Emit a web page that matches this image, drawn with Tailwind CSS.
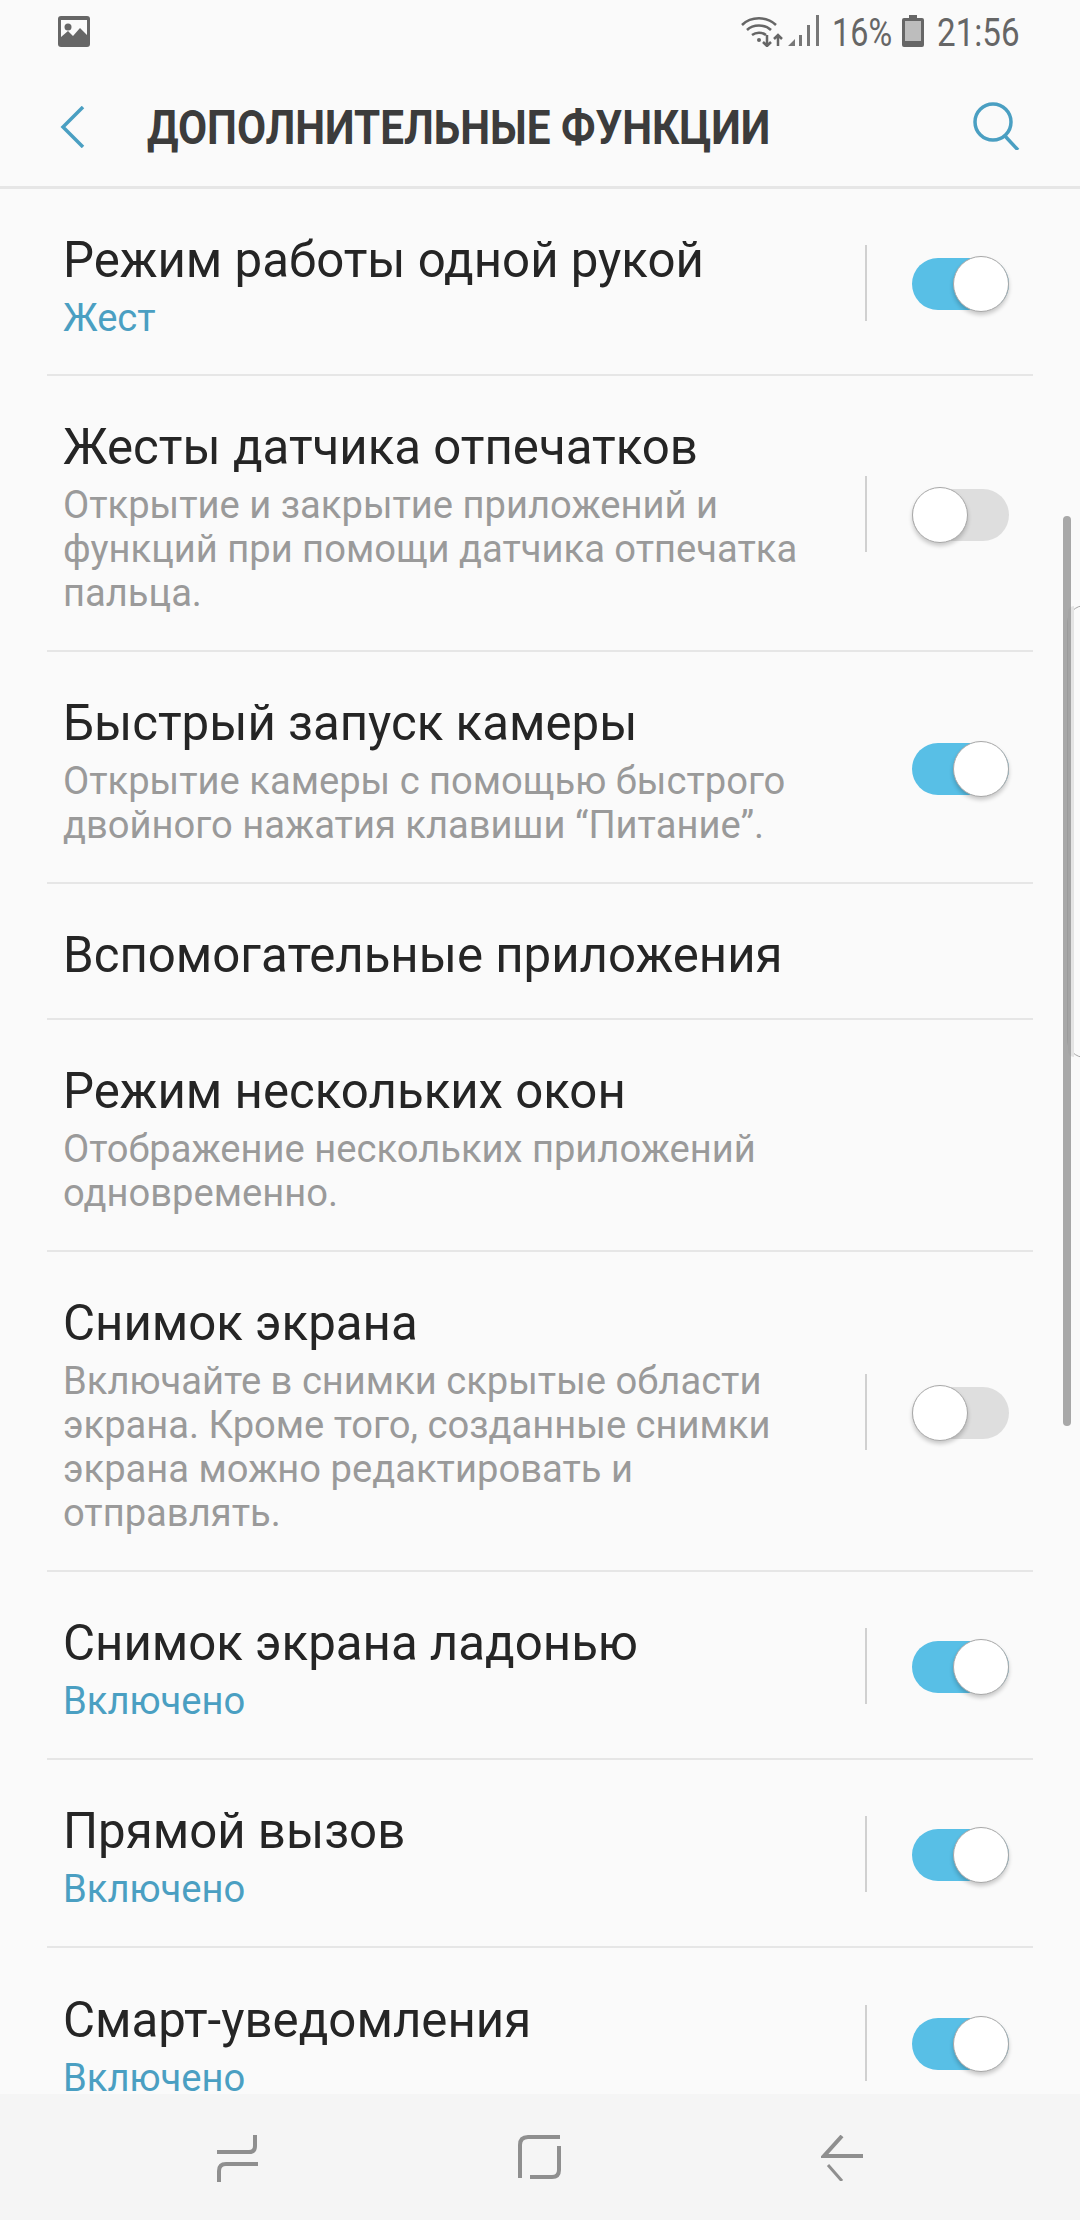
<!DOCTYPE html>
<html lang="ru">
<head>
  <meta charset="UTF-8" />
  <title>Дополнительные функции</title>
  <script src="https://cdn.jsdelivr.net/npm/@tailwindcss/browser@4"></script>
</head>
<body class="bg-[#fafafa] font-['Roboto',sans-serif]">
<div class="relative w-[1080px] h-[2220px] overflow-hidden flex flex-col">

  <!-- status bar -->
  <div class="h-[62px] shrink-0 flex items-center justify-between pl-[58px] pr-[58px] text-[#666666]">
    <svg class="w-[32px] h-[31px]" viewBox="0 0 32 31">
      <path fill="#666666" d="M3 0h26a3 3 0 0 1 3 3v25a3 3 0 0 1-3 3H3a3 3 0 0 1-3-3V3a3 3 0 0 1 3-3z"/>
      <path fill="#fafafa" d="M3 4h26v15l-7-7-7 8-5-5-7 6z"/>
      <circle cx="10" cy="11" r="3.5" fill="#666666"/>
    </svg>
    <div class="flex items-center h-full">
      <svg class="w-[43px] h-[31px] mr-[4px]" viewBox="0 0 43 31" fill="none" stroke="#666666" stroke-width="2.5">
        <path d="M1 9c9-9 25-9 34 0"/>
        <path d="M6 14c6-6 18-6 24 0"/>
        <path d="M11 19c4-3 10-3 14 0"/>
        <circle cx="18" cy="24" r="2" fill="#666666" stroke="none"/>
        <path stroke-width="2.5" d="M26 19v11M22 26l4 4 4-4M37 30V19M33 23l4-4 4 4"/>
      </svg>
      <svg class="w-[32px] h-[32px] mr-[12px]" viewBox="0 0 32 32" fill="#777777">
        <path d="M0 31l7-7v7zM11 20h3v11h-3zM19 10h3v21h-3zM28 0h3v31h-3z"/>
      </svg>
      <span class="text-[39px] leading-none w-[61px] mr-[9px] mt-[4px] scale-x-[0.83] origin-left whitespace-nowrap">16%</span>
      <svg class="w-[22px] h-[32px] mr-[13px]" viewBox="0 0 22 32">
        <path fill="#666666" d="M7 0h8v3h5a2 2 0 0 1 2 2v25a2 2 0 0 1-2 2H2a2 2 0 0 1-2-2V5a2 2 0 0 1 2-2h5z"/>
        <rect x="3" y="6" width="16" height="20" fill="#bdbdbd"/>
      </svg>
      <span class="text-[39px] leading-none w-[85px] mt-[4px] scale-x-[0.85] origin-left whitespace-nowrap">21:56</span>
    </div>
  </div>

  <!-- header -->
  <div class="h-[127px] shrink-0 flex items-center border-b-[3px] border-[#e6e6e6] relative">
    <svg class="ml-[60px] w-[25px] h-[42px] mt-[6px]" viewBox="0 0 25 42" fill="none" stroke="#4a9fc2" stroke-width="3.5">
      <path d="M23 1L3 21l20 20"/>
    </svg>
    <h1 class="ml-[62px] mt-[8px] text-[48px] leading-none font-bold text-[#3c3c3c] scale-x-[0.88] origin-left whitespace-nowrap">ДОПОЛНИТЕЛЬНЫЕ ФУНКЦИИ</h1>
    <svg class="absolute left-[972px] top-[40px] w-[48px] h-[48px]" viewBox="0 0 48 48" fill="none" stroke="#4a9fc2" stroke-width="3.5">
      <circle cx="21" cy="20" r="18"/>
      <path d="M33 34l13 14"/>
    </svg>
  </div>

  <!-- rows -->
  <div class="flex-1 overflow-hidden px-[47px]">

    <div class="flex items-center justify-between h-[187px] border-b-2 border-[#e6e6e6] pl-[16px] pr-[24px]">
      <div class="pt-[8px]">
        <div class="text-[49.2px] leading-[56px] text-[#252525]">Режим работы одной рукой</div>
        <div class="text-[38.15px] leading-[44px] mt-[8px] text-[#4a9fc2]">Жест</div>
      </div>
      <div class="flex items-center mt-[2px]">
        <div class="w-[2px] h-[76px] bg-[#d0d0d0] mr-[45px]"></div>
        <div class="relative w-[97px] h-[52px] mt-[2px] rounded-full bg-[#58bfe6]">
          <div class="absolute right-0 -top-[2px] w-[56px] h-[56px] rounded-full bg-white border border-[#a8a8a8] shadow-[0_3px_4px_rgba(0,0,0,0.2)]"></div>
        </div>
      </div>
    </div>

    <div class="flex items-center justify-between h-[276px] border-b-2 border-[#e6e6e6] pl-[16px] pr-[24px]">
      <div class="pt-[8px]">
        <div class="text-[49.2px] leading-[56px] text-[#252525]">Жесты датчика отпечатков</div>
        <div class="text-[38.15px] leading-[44px] mt-[8px] text-[#9a9a9a]">Открытие и закрытие приложений и<br>функций при помощи датчика отпечатка<br>пальца.</div>
      </div>
      <div class="flex items-center mt-[2px]">
        <div class="w-[2px] h-[76px] bg-[#d0d0d0] mr-[45px]"></div>
        <div class="relative w-[97px] h-[52px] mt-[2px] rounded-full bg-[#dedede]">
          <div class="absolute left-0 -top-[2px] w-[56px] h-[56px] rounded-full bg-white border border-[#a8a8a8] shadow-[0_3px_4px_rgba(0,0,0,0.2)]"></div>
        </div>
      </div>
    </div>

    <div class="flex items-center justify-between h-[232px] border-b-2 border-[#e6e6e6] pl-[16px] pr-[24px]">
      <div class="pt-[8px]">
        <div class="text-[49.2px] leading-[56px] text-[#252525]">Быстрый запуск камеры</div>
        <div class="text-[38.15px] leading-[44px] mt-[8px] text-[#9a9a9a]">Открытие камеры с помощью быстрого<br>двойного нажатия клавиши “Питание”.</div>
      </div>
      <div class="flex items-center mt-[2px]">
        <div class="relative w-[97px] h-[52px] mt-[2px] rounded-full bg-[#58bfe6]">
          <div class="absolute right-0 -top-[2px] w-[56px] h-[56px] rounded-full bg-white border border-[#a8a8a8] shadow-[0_3px_4px_rgba(0,0,0,0.2)]"></div>
        </div>
      </div>
    </div>

    <div class="flex items-center h-[136px] border-b-2 border-[#e6e6e6] pl-[16px]">
      <div class="pt-[8px] text-[49.2px] leading-[56px] text-[#252525]">Вспомогательные приложения</div>
    </div>

    <div class="flex items-center h-[232px] border-b-2 border-[#e6e6e6] pl-[16px]">
      <div class="pt-[8px]">
        <div class="text-[49.2px] leading-[56px] text-[#252525]">Режим нескольких окон</div>
        <div class="text-[38.15px] leading-[44px] mt-[8px] text-[#9a9a9a]">Отображение нескольких приложений<br>одновременно.</div>
      </div>
    </div>

    <div class="flex items-center justify-between h-[320px] border-b-2 border-[#e6e6e6] pl-[16px] pr-[24px]">
      <div class="pt-[8px]">
        <div class="text-[49.2px] leading-[56px] text-[#252525]">Снимок экрана</div>
        <div class="text-[38.15px] leading-[44px] mt-[8px] text-[#9a9a9a]">Включайте в снимки скрытые области<br>экрана. Кроме того, созданные снимки<br>экрана можно редактировать и<br>отправлять.</div>
      </div>
      <div class="flex items-center mt-[2px]">
        <div class="w-[2px] h-[76px] bg-[#d0d0d0] mr-[45px]"></div>
        <div class="relative w-[97px] h-[52px] mt-[2px] rounded-full bg-[#dedede]">
          <div class="absolute left-0 -top-[2px] w-[56px] h-[56px] rounded-full bg-white border border-[#a8a8a8] shadow-[0_3px_4px_rgba(0,0,0,0.2)]"></div>
        </div>
      </div>
    </div>

    <div class="flex items-center justify-between h-[188px] border-b-2 border-[#e6e6e6] pl-[16px] pr-[24px]">
      <div class="pt-[8px]">
        <div class="text-[49.2px] leading-[56px] text-[#252525]">Снимок экрана ладонью</div>
        <div class="text-[38.15px] leading-[44px] mt-[8px] text-[#4a9fc2]">Включено</div>
      </div>
      <div class="flex items-center mt-[2px]">
        <div class="w-[2px] h-[76px] bg-[#d0d0d0] mr-[45px]"></div>
        <div class="relative w-[97px] h-[52px] mt-[2px] rounded-full bg-[#58bfe6]">
          <div class="absolute right-0 -top-[2px] w-[56px] h-[56px] rounded-full bg-white border border-[#a8a8a8] shadow-[0_3px_4px_rgba(0,0,0,0.2)]"></div>
        </div>
      </div>
    </div>

    <div class="flex items-center justify-between h-[188px] border-b-2 border-[#e6e6e6] pl-[16px] pr-[24px]">
      <div class="pt-[8px]">
        <div class="text-[49.2px] leading-[56px] text-[#252525]">Прямой вызов</div>
        <div class="text-[38.15px] leading-[44px] mt-[8px] text-[#4a9fc2]">Включено</div>
      </div>
      <div class="flex items-center mt-[2px]">
        <div class="w-[2px] h-[76px] bg-[#d0d0d0] mr-[45px]"></div>
        <div class="relative w-[97px] h-[52px] mt-[2px] rounded-full bg-[#58bfe6]">
          <div class="absolute right-0 -top-[2px] w-[56px] h-[56px] rounded-full bg-white border border-[#a8a8a8] shadow-[0_3px_4px_rgba(0,0,0,0.2)]"></div>
        </div>
      </div>
    </div>

    <div class="flex items-center justify-between h-[188px] pl-[16px] pr-[24px]">
      <div class="pt-[8px]">
        <div class="text-[49.2px] leading-[56px] text-[#252525]">Смарт-уведомления</div>
        <div class="text-[38.15px] leading-[34px] mt-[13px] mb-[5px] text-[#4a9fc2]">Включено</div>
      </div>
      <div class="flex items-center mt-[2px]">
        <div class="w-[2px] h-[76px] bg-[#d0d0d0] mr-[45px]"></div>
        <div class="relative w-[97px] h-[52px] mt-[2px] rounded-full bg-[#58bfe6]">
          <div class="absolute right-0 -top-[2px] w-[56px] h-[56px] rounded-full bg-white border border-[#a8a8a8] shadow-[0_3px_4px_rgba(0,0,0,0.2)]"></div>
        </div>
      </div>
    </div>
  </div>

  <!-- nav bar -->
  <div class="h-[126px] shrink-0 bg-[#f5f5f5] flex items-start pt-[41px] pl-[217px]">
    <svg class="w-[41px] h-[47px]" viewBox="0 0 41 47" fill="none" stroke="#8f8f8f">
      <path stroke-width="4" d="M0 17h32q6 0 6-6V0"/>
      <path stroke-width="4" d="M41 29H9q-7 0-7 7v11"/>
    </svg>
    <svg class="w-[43px] h-[44px] ml-[260px]" viewBox="0 0 43 44" fill="none" stroke="#8f8f8f">
      <path stroke-width="4" d="M42 2H10q-8 0-8 8v33"/>
      <path stroke-width="4" d="M41 11v24q0 7-7 7H12"/>
    </svg>
    <svg class="w-[42px] h-[46px] ml-[260px]" viewBox="0 0 42 46" fill="none" stroke="#8f8f8f" stroke-width="4">
      <path d="M21 1L3 21h39"/>
      <path stroke-width="3" d="M7 30l14 16"/>
    </svg>
  </div>

  <!-- edge panel handle and scrollbar lie over the list -->
  <div class="absolute left-[1067px] top-[605px] w-[20px] h-[453px] rounded-l-[18px] bg-[#fafafa] border border-[#a8a8a8]">
    <div class="h-full w-[6px] bg-[#e4e4e4] rounded-l-[18px]"></div>
  </div>
  <div class="absolute left-[1063px] top-[516px] w-[8px] h-[910px] rounded-full bg-[#999999]/85"></div>
</div>
</body>
</html>
